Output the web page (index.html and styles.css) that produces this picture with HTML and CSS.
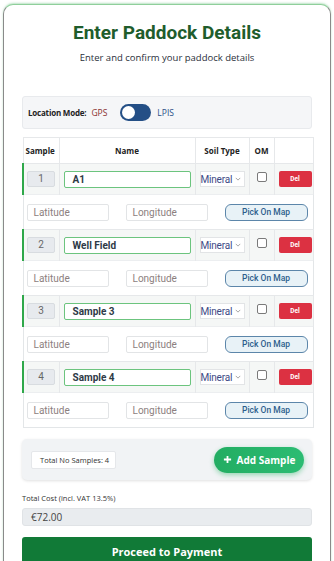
FILE: index.html
```html
<!DOCTYPE html>
<html lang="en">
<head>
<meta charset="utf-8">
<title>Enter Paddock Details</title>
<link rel="stylesheet" href="styles.css">
</head>
<body>
<div class="card">
  <h1 class="title">Enter Paddock Details</h1>
  <p class="subtitle">Enter and confirm your paddock details</p>

  <div class="mode">
    <span class="mode-label">Location Mode:</span>
    <span class="mode-gps">GPS</span>
    <span class="toggle"><span class="knob"></span></span>
    <span class="mode-lpis">LPIS</span>
  </div>

  <table class="samples">
    <colgroup>
      <col class="c-num"><col class="c-name"><col class="c-soil"><col class="c-om"><col class="c-del">
    </colgroup>
    <thead>
      <tr><th>Sample</th><th>Name</th><th>Soil Type</th><th>OM</th><th></th></tr>
    </thead>
    <tbody>
      <tr class="main">
        <td class="num-cell"><span class="num">1</span></td>
        <td><span class="name-input">A1</span></td>
        <td><span class="select">Mineral<svg class="chev" viewBox="0 0 8 5" width="6" height="4"><path d="M1 1l3 3 3-3" fill="none" stroke="#888" stroke-width="1"/></svg></span></td>
        <td class="om"><span class="check"></span></td>
        <td><span class="del">Del</span></td>
      </tr>
      <tr class="loc">
        <td colspan="5"><div class="loc-row"><span class="coord">Latitude</span><span class="coord">Longitude</span><span class="pick">Pick On Map</span></div></td>
      </tr>
      <tr class="main">
        <td class="num-cell"><span class="num">2</span></td>
        <td><span class="name-input">Well Field</span></td>
        <td><span class="select">Mineral<svg class="chev" viewBox="0 0 8 5" width="6" height="4"><path d="M1 1l3 3 3-3" fill="none" stroke="#888" stroke-width="1"/></svg></span></td>
        <td class="om"><span class="check"></span></td>
        <td><span class="del">Del</span></td>
      </tr>
      <tr class="loc">
        <td colspan="5"><div class="loc-row"><span class="coord">Latitude</span><span class="coord">Longitude</span><span class="pick">Pick On Map</span></div></td>
      </tr>
      <tr class="main">
        <td class="num-cell"><span class="num">3</span></td>
        <td><span class="name-input">Sample 3</span></td>
        <td><span class="select">Mineral<svg class="chev" viewBox="0 0 8 5" width="6" height="4"><path d="M1 1l3 3 3-3" fill="none" stroke="#888" stroke-width="1"/></svg></span></td>
        <td class="om"><span class="check"></span></td>
        <td><span class="del">Del</span></td>
      </tr>
      <tr class="loc">
        <td colspan="5"><div class="loc-row"><span class="coord">Latitude</span><span class="coord">Longitude</span><span class="pick">Pick On Map</span></div></td>
      </tr>
      <tr class="main">
        <td class="num-cell"><span class="num">4</span></td>
        <td><span class="name-input">Sample 4</span></td>
        <td><span class="select">Mineral<svg class="chev" viewBox="0 0 8 5" width="6" height="4"><path d="M1 1l3 3 3-3" fill="none" stroke="#888" stroke-width="1"/></svg></span></td>
        <td class="om"><span class="check"></span></td>
        <td><span class="del">Del</span></td>
      </tr>
      <tr class="loc">
        <td colspan="5"><div class="loc-row"><span class="coord">Latitude</span><span class="coord">Longitude</span><span class="pick">Pick On Map</span></div></td>
      </tr>
    </tbody>
  </table>

  <div class="summary">
    <span class="total">Total No Samples: 4</span>
    <span class="add"><svg class="plus" viewBox="0 0 10 10" width="9" height="9"><path d="M5 1v8M1 5h8" stroke="#fff" stroke-width="2"/></svg>Add Sample</span>
  </div>

  <div class="cost-label">Total Cost (incl. VAT 13.5%)</div>
  <div class="cost">€72.00</div>
  <div class="proceed">Proceed to Payment</div>
</div>
</body>
</html>
```
FILE: styles.css
```css
html, body {
  margin: 0;
  padding: 0;
  background: #ffffff;
}
body {
  font-family: "Open Sans", "Noto Sans", sans-serif;
  color: #333;
}
.card {
  margin: 4px 0 0 3px;
  width: 328px;
  box-sizing: border-box;
  border: 1px solid #8a8a8a;
  border-top: 1px solid #8fcf9b;
  border-radius: 10px 10px 0 0;
  padding: 0 18px 40px 18px;
  background: #fff;
  box-shadow: 0 -1px 2px rgba(120, 200, 140, 0.5);
}
.title {
  margin: 16px 0 0;
  font-family: Roboto, sans-serif;
  font-weight: 700;
  font-size: 19px;
  line-height: 24px;
  text-align: center;
  color: #1f5d2c;
}
.subtitle {
  margin: 6px 0 0;
  font-size: 9.5px;
  line-height: 14px;
  text-align: center;
  color: #2a2f3a;
}
.mode {
  margin-top: 31px;
  height: 33px;
  box-sizing: border-box;
  background: #f5f6f8;
  border: 1px solid #e8eaed;
  border-radius: 3px;
  display: flex;
  align-items: center;
  padding: 0 0 0 5px;
  font-size: 8px;
}
.mode-label {
  font-weight: 700;
  color: #222;
  letter-spacing: -0.2px;
}
.mode-gps {
  margin-left: 5px;
  font-size: 8.5px;
  color: #8a3030;
}
.toggle {
  margin-left: 13px;
  width: 31px;
  height: 17px;
  border-radius: 9px;
  background: #244f86;
  display: flex;
  align-items: center;
  padding-left: 2px;
  box-sizing: border-box;
}
.knob {
  width: 13px;
  height: 13px;
  border-radius: 50%;
  background: #fff;
}
.mode-lpis {
  margin-left: 6px;
  font-size: 8.5px;
  color: #2a4f86;
}
.samples {
  margin-top: 8px;
  width: 290px;
  border-collapse: collapse;
  table-layout: fixed;
  font-family: Roboto, sans-serif;
  border: 1px solid #e3e6e8;
}
.c-num { width: 36px; }
.c-name { width: 136px; }
.c-soil { width: 54px; }
.c-om { width: 25px; }
.c-del { width: 39px; }
.samples th {
  height: 25px;
  padding: 0;
  font-family: "Open Sans", sans-serif;
  font-size: 8px;
  font-weight: 700;
  color: #222;
  border: 1px solid #e6e8ea;
  text-align: center;
  background: #fff;
}
.samples th:first-child { text-align: left; padding-left: 2px; }
.main td {
  height: 31px;
  padding: 0 4px;
  background: #f5f7f6;
  border: 1px solid #e6e8ea;
  border-bottom: none;
  vertical-align: middle;
  box-sizing: border-box;
}
.main td.num-cell {
  border-left: 2px solid #2fa84a;
  padding-left: 3px;
}
.num {
  display: block;
  width: 28px;
  height: 16px;
  box-sizing: border-box;
  background: #e7eaee;
  border: 1px solid #d8dce0;
  border-radius: 2px;
  color: #666;
  font-size: 10px;
  line-height: 14px;
  text-align: center;
}
.name-input {
  display: block;
  height: 17px;
  box-sizing: border-box;
  border: 1px solid #6cc47e;
  border-radius: 2px;
  background: #fff;
  padding-left: 8px;
  font-size: 10px;
  font-weight: 700;
  line-height: 15px;
  color: #2e3a46;
}
.select {
  display: flex;
  align-items: center;
  justify-content: space-between;
  height: 16px;
  box-sizing: border-box;
  background: #fff;
  border: 1px solid #e2e4e6;
  padding: 0 3px 0 0;
  font-size: 10px;
  letter-spacing: -0.2px;
  color: #3d4a86;
}
.chev { display: block; flex: none; }
.om { text-align: center; vertical-align: middle; }
.check {
  display: block;
  margin: -5px auto 0;
  width: 10px;
  height: 10px;
  box-sizing: border-box;
  border: 1px solid #7a7a7a;
  border-radius: 2px;
  background: #fff;
}
.del {
  display: block;
  width: 33px;
  height: 16px;
  background: #dc3142;
  border-radius: 2px;
  color: #fff;
  font-size: 6.5px;
  font-weight: 700;
  line-height: 16px;
  text-align: center;
}
.loc td {
  height: 34px;
  padding: 0 3px;
  background: #fff;
  border-top: 1px solid #eceef0;
}
.loc-row {
  display: flex;
  gap: 17px;
  align-items: center;
}
.coord, .pick {
  height: 17px;
  box-sizing: border-box;
  font-size: 10px;
  line-height: 15px;
}
.coord {
  width: 82px;
  border: 1px solid #e2e4e6;
  border-radius: 2px;
  background: #fff;
  color: #8c7f80;
  padding-left: 6px;
}
.pick {
  width: 83px;
  border: 1px solid #5c86aa;
  border-radius: 6px;
  background: #e8f2f7;
  color: #2d5e8c;
  font-size: 8.5px;
  font-weight: 500;
  text-align: center;
}
.summary {
  margin-top: 11px;
  height: 41px;
  box-sizing: border-box;
  background: #f1f3f5;
  border-radius: 5px;
  box-shadow: 0 1px 3px rgba(0, 0, 0, 0.12);
  display: flex;
  align-items: center;
  justify-content: space-between;
  padding: 0 8px 0 9px;
}
.total {
  height: 18px;
  box-sizing: border-box;
  background: #fff;
  border: 1px solid #e5e7ea;
  border-radius: 2px;
  padding: 0 6px 0 8px;
  font-size: 7.5px;
  line-height: 16px;
  color: #333;
}
.add {
  width: 90px;
  height: 26px;
  border-radius: 13px;
  background: linear-gradient(90deg, #22ad62, #2cbc73);
  box-shadow: 0 2px 5px rgba(40, 180, 100, 0.45);
  color: #fff;
  font-size: 10px;
  font-weight: 700;
  display: flex;
  align-items: center;
  justify-content: center;
  gap: 5px;
}
.plus { display: block; }
.cost-label {
  margin-top: 13px;
  font-size: 7.5px;
  line-height: 10px;
  color: #333;
}
.cost {
  margin-top: 5px;
  height: 18px;
  box-sizing: border-box;
  background: #e9ecef;
  border: 1px solid #e0e3e6;
  border-radius: 3px;
  padding-left: 8px;
  font-size: 10px;
  line-height: 16px;
  color: #444;
}
.proceed {
  margin-top: 11px;
  height: 32px;
  background: #117a37;
  border-radius: 3px;
  color: #fff;
  font-size: 11px;
  font-weight: 700;
  line-height: 30px;
  text-align: center;
}
```
